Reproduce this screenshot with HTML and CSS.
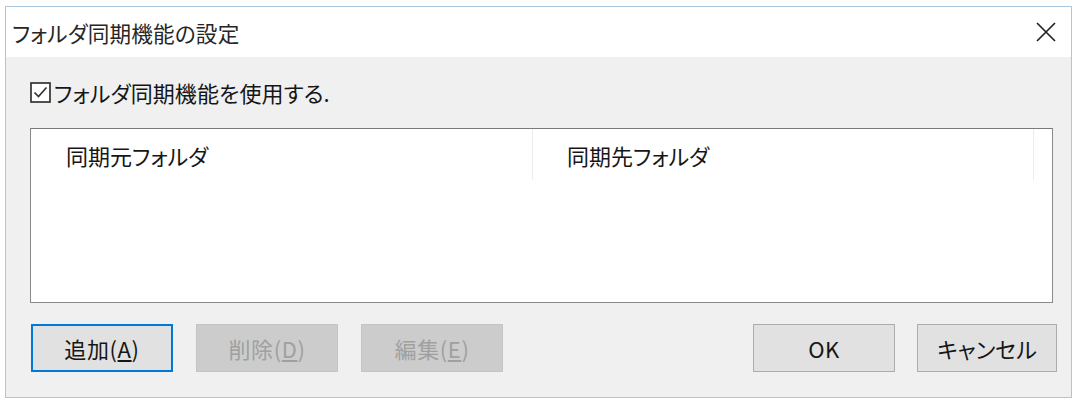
FILE: index.html
```html
<!DOCTYPE html>
<html lang="ja">
<head>
<meta charset="utf-8">
<title>フォルダ同期機能の設定</title>
<link rel="stylesheet" href="styles.css">
</head>
<body>
<div class="window">
  <div class="titlebar">
    <span class="title">フォルダ同期機能の設定</span>
    <span class="close">
      <svg width="22" height="22" viewBox="0 0 22 22"><path d="M2 2 L20 20 M20 2 L2 20" stroke="#222" stroke-width="1.7" fill="none"/></svg>
    </span>
  </div>
  <div class="body">
    <label class="check-row">
      <span class="checkbox">
        <svg width="21" height="21" viewBox="0 0 21 21"><rect x="1" y="1" width="19" height="19" fill="#fff" stroke="#333" stroke-width="1.7"/><path d="M4.5 10.5 L8.5 14.5 L16.5 5.5" stroke="#333" stroke-width="1.7" fill="none"/></svg>
      </span>
      <span class="check-label">フォルダ同期機能を使用する.</span>
    </label>
    <div class="list">
      <div class="list-header">
        <div class="col col-src">同期元フォルダ</div>
        <div class="col col-dst">同期先フォルダ</div>
        <div class="col col-rest"></div>
      </div>
    </div>
    <div class="buttons">
      <div class="btn-group">
        <button class="btn btn-default">追加(<u>A</u>)</button>
        <button class="btn" disabled>削除(<u>D</u>)</button>
        <button class="btn" disabled>編集(<u>E</u>)</button>
      </div>
      <div class="btn-group right">
        <button class="btn">OK</button>
        <button class="btn btn-cancel">キャンセル</button>
      </div>
    </div>
  </div>
</div>
</body>
</html>
```

FILE: styles.css
```css
html, body {
  margin: 0;
  padding: 0;
  background: #ffffff;
}
body {
  font-family: "Noto Sans CJK JP", "Noto Sans", sans-serif;
  color: #161616;
  font-feature-settings: "palt";
}
.window {
  margin: 6px 0 0 5px;
  width: 1067px;
  height: 392px;
  box-sizing: border-box;
  border: 1px solid #a9c6e2;
  display: flex;
  flex-direction: column;
  background: #f0f0f0;
}
.titlebar {
  height: 50px;
  flex: none;
  background: #ffffff;
  display: flex;
  align-items: center;
  justify-content: space-between;
  padding: 0 0 0 6px;
}
.title {
  font-size: 21.6px;
  color: #262626;
  letter-spacing: 0.2px;
}
.close {
  width: 50px;
  display: flex;
  justify-content: center;
  align-items: center;
}
.close svg { display: block; }
.body {
  flex: 1;
  display: flex;
  flex-direction: column;
  padding: 0 14px 0 24px;
}
.check-row {
  margin-top: 25px;
  height: 21px;
  display: flex;
  align-items: center;
  gap: 3px;
}
.checkbox svg { display: block; }
.check-label {
  font-size: 22px;
  line-height: 21px;
  letter-spacing: 0.1px;
}
.list {
  margin-top: 25px;
  margin-right: 4px;
  height: 175px;
  box-sizing: border-box;
  background: #ffffff;
  border: 1px solid #8a8a8a;
  border-top-color: #7a7a7a;
}
.list-header {
  display: flex;
  height: 51px;
}
.col {
  font-size: 22px;
  display: flex;
  align-items: center;
  box-sizing: border-box;
  border-right: 1px solid #ececec;
}
.col-src { width: 502px; padding-left: 35px; }
.col-dst { width: 501px; padding-left: 34px; }
.col-rest { flex: 1; border-right: none; }
.buttons {
  margin-top: 21px;
  display: flex;
  justify-content: space-between;
}
.btn-group {
  display: flex;
  gap: 23px;
}
.btn-group.right { gap: 22px; }
.btn {
  width: 142px;
  height: 48px;
  box-sizing: border-box;
  background: #e1e1e1;
  border: 1px solid #adadad;
  font-family: "Noto Sans CJK JP", "Noto Sans", sans-serif;
  font-feature-settings: "palt";
  font-size: 22px;
  letter-spacing: 0.6px;
  color: #161616;
  padding: 0;
  margin: 0;
  display: flex;
  align-items: center;
  justify-content: center;
}
.btn u { text-underline-offset: 2px; }
.btn-default {
  border: 2px solid #0078d7;
  margin-left: 1px;
}
.btn:disabled {
  background: #cccccc;
  border-color: #c4c4c4;
  color: #a0a0a0;
}
.btn-cancel { width: 140px; letter-spacing: 0; }
```
